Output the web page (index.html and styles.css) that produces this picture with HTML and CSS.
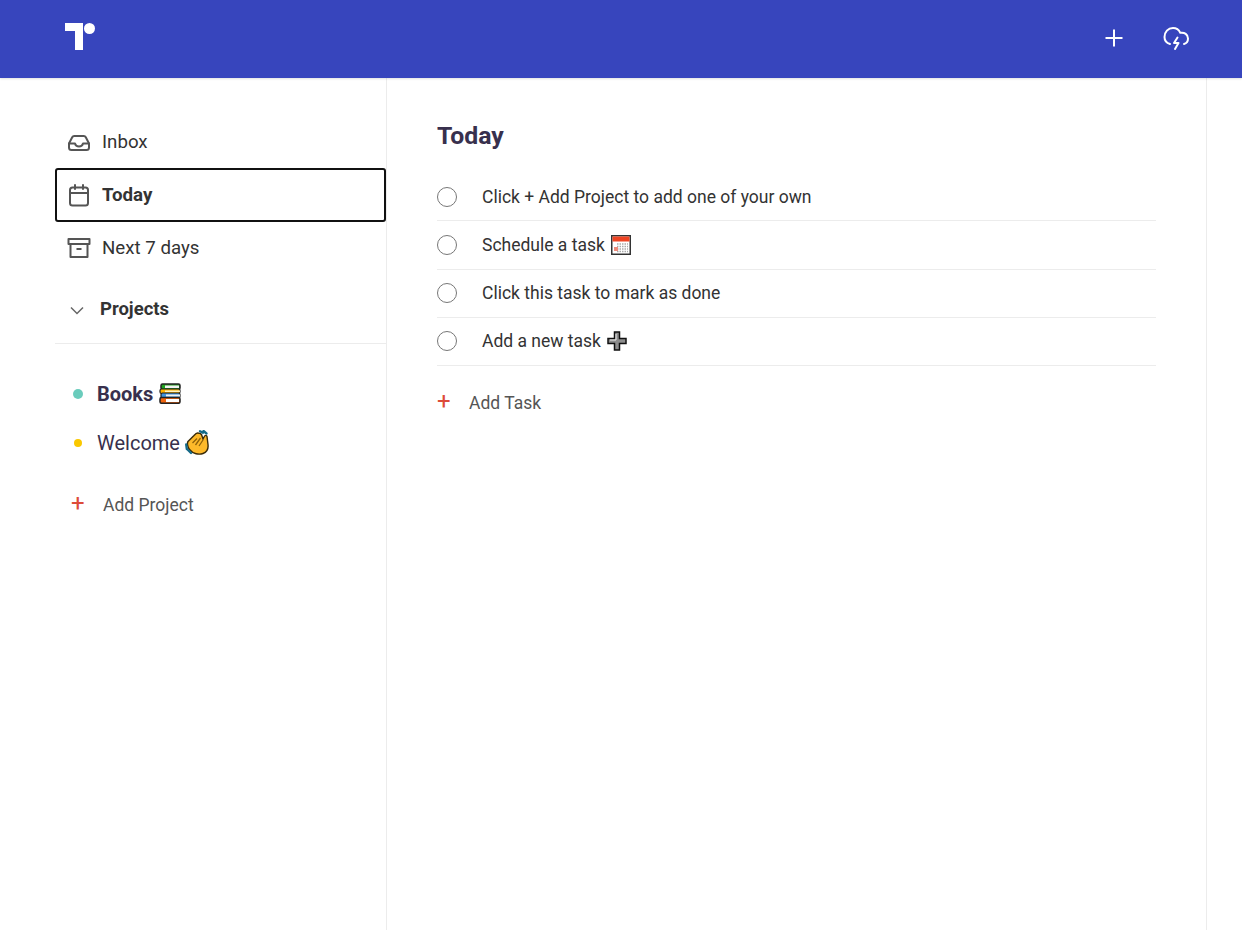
FILE: index.html
```html
<!DOCTYPE html>
<html lang="en">
<head>
<meta charset="utf-8">
<title>Today</title>
<link rel="stylesheet" href="styles.css">
</head>
<body>
<header class="topbar">
  <svg class="logo" width="30" height="28" viewBox="0 0 30 28"><path d="M0 0H18V27H10V8H0Z" fill="#fff"/><circle cx="24.500" cy="5.500" r="5.500" fill="#fff"/></svg>
  <div class="topbar-actions">
    <svg class="top-plus" width="20" height="20" viewBox="0 0 20 20"><path d="M10 1.500V18.500M1.500 10H18.500" stroke="#fff" stroke-width="2" fill="none"/></svg>
    <svg class="top-cloud" width="26" height="27" viewBox="0 0 26 26" fill="none" stroke="#fff" stroke-width="2" stroke-linecap="round" stroke-linejoin="round"><path d="M7 18.500C3.500 17.500 1.500 15 1.500 11.500C1.500 6.500 5 2.500 10 2.500C13.500 2.500 16 4.500 17.300 7.300C21.500 6.500 25 9 25 13C25 15.800 23.500 17.800 21 18.500"/><path d="M14.500 12L11 17.500H15.500L12 23.500"/></svg>
  </div>
</header>
<div class="layout">
  <aside class="sidebar">
    <nav class="nav">
      <a class="nav-item nav-item-first">
        <svg class="nav-icon" width="24" height="24" viewBox="0 0 24 24" fill="none" stroke="#555" stroke-width="2" stroke-linecap="round" stroke-linejoin="round"><path d="M2 13.500V17.500C2 18.900 3 20 4.500 20H19.500C21 20 22 18.900 22 17.500V13.500L18.800 7.300C18.400 6.500 17.700 6 16.800 6H7.200C6.300 6 5.600 6.500 5.200 7.300Z"/><path d="M2 13.500H8C8.500 15.500 10 16.500 12 16.500C14 16.500 15.500 15.500 16 13.500H22"/></svg>
        <span>Inbox</span>
      </a>
      <a class="nav-item nav-item-active">
        <svg class="nav-icon" width="24" height="24" viewBox="0 0 24 24" fill="none" stroke="#555" stroke-width="2" stroke-linecap="round" stroke-linejoin="round"><rect x="3" y="4.500" width="18" height="18" rx="2.500"/><path d="M3 10H21M8 2V6M16 2V6"/></svg>
        <span>Today</span>
      </a>
      <a class="nav-item">
        <svg class="nav-icon" width="24" height="24" viewBox="0 0 24 24" fill="none" stroke="#555" stroke-width="2" stroke-linejoin="round"><rect x="1.500" y="3" width="21" height="5"/><path d="M3.500 8V21H20.500V8M9.500 13H14.500"/></svg>
        <span>Next 7 days</span>
      </a>
    </nav>
    <div class="projects-head">
      <svg class="chevron" width="14" height="9" viewBox="0 0 14 9" fill="none" stroke="#666" stroke-width="1.500"><path d="M1 1.500L7 7.500L13 1.500"/></svg>
      <span>Projects</span>
    </div>
    <ul class="project-list">
      <li class="project project-bold">
        <span class="dot dot-teal"></span><span class="project-name">Books</span>
        <svg class="emoji" width="22" height="21" viewBox="0 0 22 21"><rect x="2" y="1" width="19" height="5.500" rx="1.500" fill="#1fa51f" stroke="#222" stroke-width="1.500"/><rect x="6" y="2.500" width="14" height="2.500" fill="#f2f2f2"/><rect x="1" y="6" width="20" height="4.500" rx="1.500" fill="#ffb300" stroke="#222" stroke-width="1.200"/><rect x="6" y="7.500" width="15" height="1.500" fill="#fff3c0"/><rect x="2" y="10" width="19" height="5" rx="1.500" fill="#3f94e0" stroke="#222" stroke-width="1.200"/><rect x="7" y="11.500" width="14" height="2" fill="#f2f2f2"/><rect x="1" y="14.500" width="20" height="5.800" rx="1.500" fill="#f0640f" stroke="#222" stroke-width="1.500"/><rect x="7" y="16" width="13" height="3" fill="#fff"/></svg>
      </li>
      <li class="project">
        <span class="dot dot-yellow"></span><span class="project-name">Welcome</span>
        <svg class="emoji emoji-wave" width="24" height="25" viewBox="0 0 24 25"><path d="M12.500 3C11.500 3 10.500 3.800 9 5.500L3 11.500C2 13 2.500 17 4.500 19.500C8 24 14 25 18 23.500C22 22 23.500 18.500 23 14.500L22 6.500C21.700 5 20 5 19.300 6.500L18 9L16.500 4.500C15.500 3 14 3 12.500 3Z" fill="#fdb92a" stroke="#3a2b08" stroke-width="1.400"/><path d="M12 8.500L7.500 13M15.500 8L10.500 15M18 10L14 16" stroke="#8f620a" stroke-width="1.300" fill="none"/><path d="M15 1.200L18 2.800M18.500 1L21.500 3.500M1.200 14.500L1.800 19M3 20L6 23" stroke="#146a88" stroke-width="2.300" stroke-linecap="round" fill="none"/></svg>
      </li>
    </ul>
    <a class="add-project"><span class="red-plus">+</span><span>Add Project</span></a>
  </aside>
  <main class="content">
    <h1 class="title">Today</h1>
    <ul class="tasks">
      <li class="task"><span class="circle"></span><span>Click + Add Project to add one of your own</span></li>
      <li class="task"><span class="circle"></span><span>Schedule a task</span>
        <svg class="emoji" width="20" height="20" viewBox="0 0 20 20"><rect x="0.750" y="0.750" width="18.500" height="18.500" fill="#fff" stroke="#333" stroke-width="1.500"/><rect x="1.500" y="1.500" width="17" height="5" fill="#ef4423"/><path d="M6 9H17M6 11.500H17M6 14H17M6 16.500H17" stroke="#aaa" stroke-width="1.400" stroke-dasharray="1.500 1"/><rect x="3" y="12" width="4" height="4" fill="#ef8a7a"/></svg>
      </li>
      <li class="task"><span class="circle"></span><span>Click this task to mark as done</span></li>
      <li class="task"><span class="circle"></span><span>Add a new task</span>
        <svg class="emoji" width="20" height="20" viewBox="0 0 20 20"><path d="M7.500 1H12.500V7.500H19V12.500H12.500V19H7.500V12.500H1V7.500H7.500Z" fill="#8d8d8d" stroke="#111" stroke-width="1.500"/><path d="M9 3V9H3" stroke="#eee" stroke-width="1" fill="none"/></svg>
      </li>
    </ul>
    <a class="add-task"><span class="red-plus">+</span><span>Add Task</span></a>
  </main>
</div>
</body>
</html>
```
FILE: styles.css
```css
* { box-sizing: border-box; }
html, body { margin: 0; height: 100%; }
body {
  font-family: Roboto, "Liberation Sans", sans-serif;
  font-size: 17.5px;
  color: #333;
  background: #fff;
  height: 930px;
  overflow: hidden;
}
.topbar {
  height: 78px;
  background: #3745bd;
  box-shadow: 0 1px 2px rgba(0, 0, 0, .12);
  display: flex;
  justify-content: space-between;
  padding: 23px 53px 0 65px;
  position: relative;
}
.logo { display: block; }
.topbar-actions { display: flex; gap: 39px; align-items: flex-start; }
.top-plus { margin-top: 5px; }
.top-cloud { margin-top: 2px; }
.layout { display: flex; height: 852px; padding-left: 55px; }
.sidebar {
  width: 332px;
  border-right: 1px solid #ececec;
  padding-top: 37px;
  flex: none;
}
.nav { display: flex; flex-direction: column; font-size: 18.700px; }
.nav-item {
  display: flex;
  align-items: center;
  height: 53px;
  padding: 0 0 2px 12px;
  gap: 11px;
  color: #333;
}
.nav-item-first { padding-bottom: 0; }
.nav-item-active {
  height: 54px;
  font-weight: 700;
  border: 2px solid #111;
  border-radius: 3px;
  padding: 0 0 0 10px;
}
.nav-icon { flex: none; }
.projects-head {
  display: flex;
  align-items: center;
  height: 69px;
  padding: 0 0 0 15px;
  gap: 16px;
  font-size: 18.500px;
  font-weight: 700;
  border-bottom: 1px solid #ececec;
}
.chevron { margin-top: 3px; }
.project-list { list-style: none; margin: 25px 0 0; padding: 0 0 0 18px; }
.project {
  display: flex;
  align-items: center;
  height: 49px;
  gap: 6px;
  font-size: 20px;
  color: #38304d;
}
.project-bold { font-weight: 700; }
.dot { border-radius: 50%; flex: none; }
.dot-teal { width: 10px; height: 10px; margin: 0 8px 0 0; background: #6accbc; }
.dot-yellow { width: 8px; height: 8px; margin: 0 9px 0 1px; background: #fac800; }
.emoji-wave { margin-left: -1px; }
.add-project, .add-task {
  display: flex;
  align-items: center;
  color: #555;
}
.add-project { padding-left: 16px; margin-top: 19px; height: 38px; gap: 19px; }
.red-plus { color: #dd4b39; font-size: 24px; line-height: 1; width: 13px; margin-top: -4px; }
.content {
  width: 820px;
  flex: none;
  border-right: 1px solid #ececec;
  padding: 42px 50px 0 50px;
}
.title { font-size: 24.800px; font-weight: 700; color: #38304d; margin: 0 0 21px; line-height: 32px; }
.tasks { list-style: none; margin: 0; padding: 0; }
.task {
  display: flex;
  align-items: center;
  height: 48.250px;
  border-bottom: 1px solid #ececec;
  color: #333;
}
.circle {
  width: 20px;
  height: 20px;
  border: 1px solid #777;
  border-radius: 50%;
  margin-right: 25px;
  flex: none;
}
.task .emoji { margin-left: 6px; }
.add-task { margin-top: 18px; height: 38px; gap: 19px; }
```
